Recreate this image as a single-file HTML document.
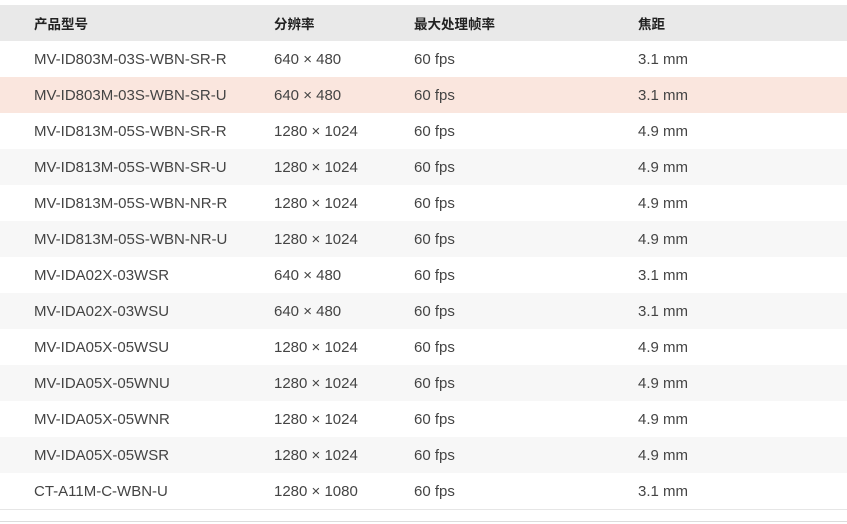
<!DOCTYPE html><html><head><meta charset="utf-8"><style>
body{margin:0;width:847px;height:524px;background:#fff;font-family:"Liberation Sans","Noto Sans CJK SC",sans-serif;color:#444;position:relative;overflow:hidden}
table{position:absolute;top:5px;left:0;width:847px;border-collapse:collapse;font-size:15px}
td,th{height:36px;padding:0;text-align:left;vertical-align:middle}
th{font-weight:bold;color:#222;background:#e9e9e9;font-size:13.5px}
td:nth-child(1),th:nth-child(1){padding-left:34px;width:240px}
td:nth-child(2),th:nth-child(2){width:140px}
td:nth-child(3),th:nth-child(3){width:224px}
tr.s td{background:#f7f7f7}
tr.h td{background:#fae6de}
.l1{position:absolute;left:0;top:509px;width:847px;height:1px;background:#e6e6e6}
.l2{position:absolute;left:0;top:521px;width:847px;height:1px;background:#dcdcdc}
</style></head><body>
<table>
<tr><th>产品型号</th><th>分辨率</th><th>最大处理帧率</th><th>焦距</th></tr>
<tr><td>MV-ID803M-03S-WBN-SR-R</td><td>640 × 480</td><td>60 fps</td><td>3.1 mm</td></tr>
<tr class="h"><td>MV-ID803M-03S-WBN-SR-U</td><td>640 × 480</td><td>60 fps</td><td>3.1 mm</td></tr>
<tr><td>MV-ID813M-05S-WBN-SR-R</td><td>1280 × 1024</td><td>60 fps</td><td>4.9 mm</td></tr>
<tr class="s"><td>MV-ID813M-05S-WBN-SR-U</td><td>1280 × 1024</td><td>60 fps</td><td>4.9 mm</td></tr>
<tr><td>MV-ID813M-05S-WBN-NR-R</td><td>1280 × 1024</td><td>60 fps</td><td>4.9 mm</td></tr>
<tr class="s"><td>MV-ID813M-05S-WBN-NR-U</td><td>1280 × 1024</td><td>60 fps</td><td>4.9 mm</td></tr>
<tr><td>MV-IDA02X-03WSR</td><td>640 × 480</td><td>60 fps</td><td>3.1 mm</td></tr>
<tr class="s"><td>MV-IDA02X-03WSU</td><td>640 × 480</td><td>60 fps</td><td>3.1 mm</td></tr>
<tr><td>MV-IDA05X-05WSU</td><td>1280 × 1024</td><td>60 fps</td><td>4.9 mm</td></tr>
<tr class="s"><td>MV-IDA05X-05WNU</td><td>1280 × 1024</td><td>60 fps</td><td>4.9 mm</td></tr>
<tr><td>MV-IDA05X-05WNR</td><td>1280 × 1024</td><td>60 fps</td><td>4.9 mm</td></tr>
<tr class="s"><td>MV-IDA05X-05WSR</td><td>1280 × 1024</td><td>60 fps</td><td>4.9 mm</td></tr>
<tr><td>CT-A11M-C-WBN-U</td><td>1280 × 1080</td><td>60 fps</td><td>3.1 mm</td></tr>
</table>
<div class="l1"></div><div class="l2"></div>
</body></html>
